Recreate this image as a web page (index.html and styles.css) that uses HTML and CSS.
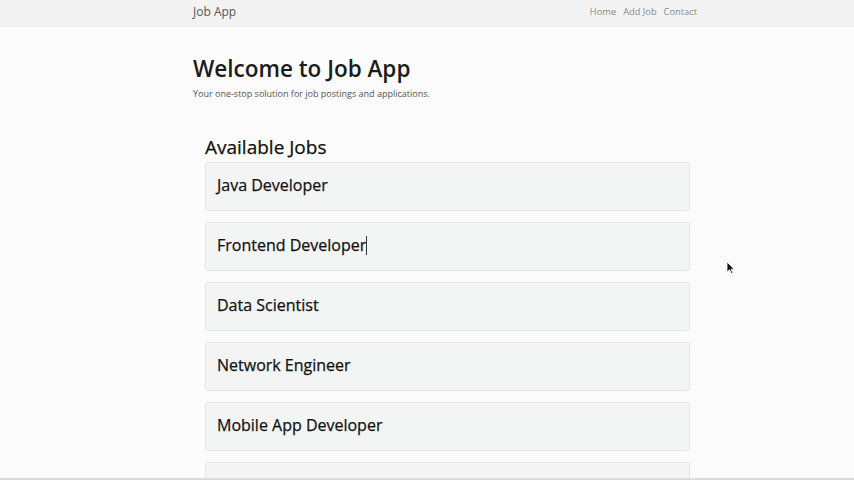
FILE: index.html
```html
<!DOCTYPE html>
<html>
<head>
<meta charset="utf-8">
<link rel="stylesheet" href="styles.css">
</head>
<body>
<nav class="navbar">
  <div class="nav-inner">
    <span class="brand">Job App</span>
    <div class="links">
      <span>Home</span>
      <span>Add Job</span>
      <span>Contact</span>
    </div>
  </div>
</nav>
<main class="container">
  <header class="hero">
    <h1>Welcome to Job App</h1>
    <p>Your one-stop solution for job postings and applications.</p>
  </header>
  <section class="jobs">
    <h2>Available Jobs</h2>
    <div class="card"><h3>Java Developer</h3></div>
    <div class="card"><h3>Frontend Developer<span class="caret"></span></h3></div>
    <div class="card"><h3>Data Scientist</h3></div>
    <div class="card"><h3>Network Engineer</h3></div>
    <div class="card"><h3>Mobile App Developer</h3></div>
    <div class="card"><h3>&nbsp;</h3></div>
  </section>
</main>
<svg class="cursor" width="10" height="14" viewBox="0 0 10 14"><path d="M1 1 L1 11 L3.5 8.8 L5.3 12.6 L6.8 11.9 L5 8.2 L8.3 8.2 Z" fill="#111" stroke="#fff" stroke-width="0.8"/></svg>
<div class="bottom-strip"></div>
</body>
</html>
```
FILE: styles.css
```css
html, body {
  margin: 0;
  padding: 0;
  height: 480px;
  overflow: hidden;
}
body {
  background: #fbfbfb;
  font-family: "Open Sans", "Noto Sans", sans-serif;
  color: #212529;
  position: relative;
}
.navbar {
  background: #f3f3f3;
  height: 26px;
  border-bottom: 1px solid #ededed;
}
.nav-inner {
  width: 504px;
  margin-left: 193px;
  height: 100%;
  display: flex;
  align-items: center;
  justify-content: space-between;
}
.brand {
  font-size: 12px;
  color: #555;
  margin-top: -4px;
}
.links {
  display: flex;
  gap: 7px;
  font-size: 9.3px;
  color: #8a8a8a;
  margin-top: -4px;
}
.container {
  margin-left: 193px;
  width: 504px;
}
.hero {
  padding-top: 26px;
}
.hero h1 {
  margin: 0;
  font-size: 22.5px;
  font-weight: 600;
  line-height: 32px;
  color: #1b1b1b;
}
.hero p {
  margin: 2px 0 0;
  font-size: 9px;
  color: #555;
  line-height: 14px;
}
.jobs {
  margin-left: 12px;
  width: 485px;
  padding-top: 33px;
}
.jobs h2 {
  margin: 0 0 2px;
  font-size: 19px;
  font-weight: 400;
  line-height: 26px;
  color: #111;
}
.card {
  box-sizing: border-box;
  height: 49px;
  background: #f3f4f4;
  border: 1px solid #e4e5e5;
  border-radius: 3px;
  margin-bottom: 11px;
  padding: 0 11px;
  display: flex;
  align-items: center;
}
.card h3 {
  margin: 0;
  font-size: 16px;
  font-weight: 400;
  color: #111;
  margin-top: -4px;
  -webkit-text-stroke: 0.25px #111;
}
.jobs h2 {
  -webkit-text-stroke: 0.25px #111;
}
.caret {
  display: inline-block;
  width: 1px;
  height: 19px;
  background: #333;
  vertical-align: -4px;
}
.cursor {
  position: absolute;
  left: 726px;
  top: 261px;
}
.bottom-strip {
  position: absolute;
  left: 0;
  right: 0;
  bottom: 0;
  height: 2px;
  background: #dcdcd0;
}
```
